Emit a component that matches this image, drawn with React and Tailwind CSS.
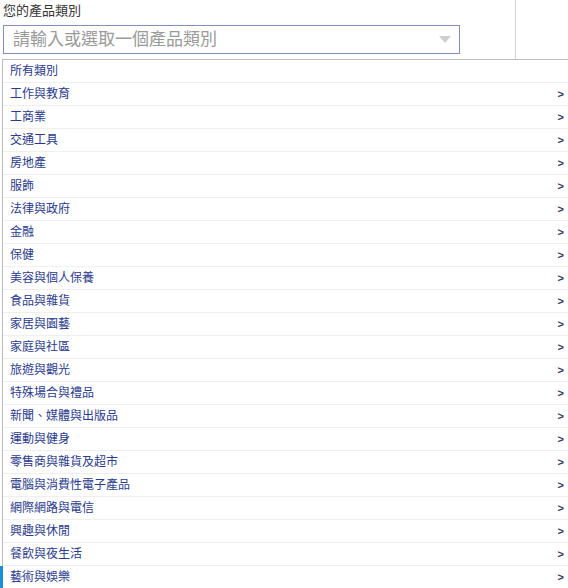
import React from "react";

const categories = [
  "所有類別",
  "工作與教育",
  "工商業",
  "交通工具",
  "房地產",
  "服飾",
  "法律與政府",
  "金融",
  "保健",
  "美容與個人保養",
  "食品與雜貨",
  "家居與園藝",
  "家庭與社區",
  "旅遊與觀光",
  "特殊場合與禮品",
  "新聞、媒體與出版品",
  "運動與健身",
  "零售商與雜貨及超市",
  "電腦與消費性電子產品",
  "網際網路與電信",
  "興趣與休閒",
  "餐飲與夜生活",
  "藝術與娛樂",
];

function App() {
  return (
    <div
      className="w-[568px] h-[588px] overflow-hidden bg-white"
      style={{ fontFamily: '"Liberation Sans", "Noto Sans CJK TC", sans-serif' }}
    >
      <div className="flex h-[59px]">
        <div className="w-[516px] border-r border-[#d4d4d4] pl-[3px] pt-[3px]">
          <div className="text-[13px] leading-[16px] text-[#333]">您的產品類別</div>
          <div className="mt-[6px] w-[457px] h-[29px] border border-[#8090b8] flex items-center justify-between pl-[9px] pr-[8px]">
            <span className="text-[17px] text-[#9a9a9a]">請輸入或選取一個產品類別</span>
            <span className="w-0 h-0 border-l-[6px] border-r-[6px] border-t-[7px] border-l-transparent border-r-transparent border-t-[#cfcfcf]" />
          </div>
        </div>
      </div>
      <div className="ml-[2px] border-l border-t border-[#bdbdbd]">
        {categories.map((c, i) => (
          <div
            key={c}
            className={
              "relative flex items-center justify-between h-[23px] border-b border-[#efefef] pl-[7px] pr-[4px] text-[12px] text-[#2a3a8c]"
            }
          >
            {i === categories.length - 1 && (
              <span className="absolute left-[-3px] top-0 bottom-0 w-[3px] bg-[#1a8fd8]" />
            )}
            <span>{c}</span>
            {i > 0 && <span className="font-bold text-[11px] text-[#333a5a]">&gt;</span>}
          </div>
        ))}
      </div>
    </div>
  );
}

export default App;
